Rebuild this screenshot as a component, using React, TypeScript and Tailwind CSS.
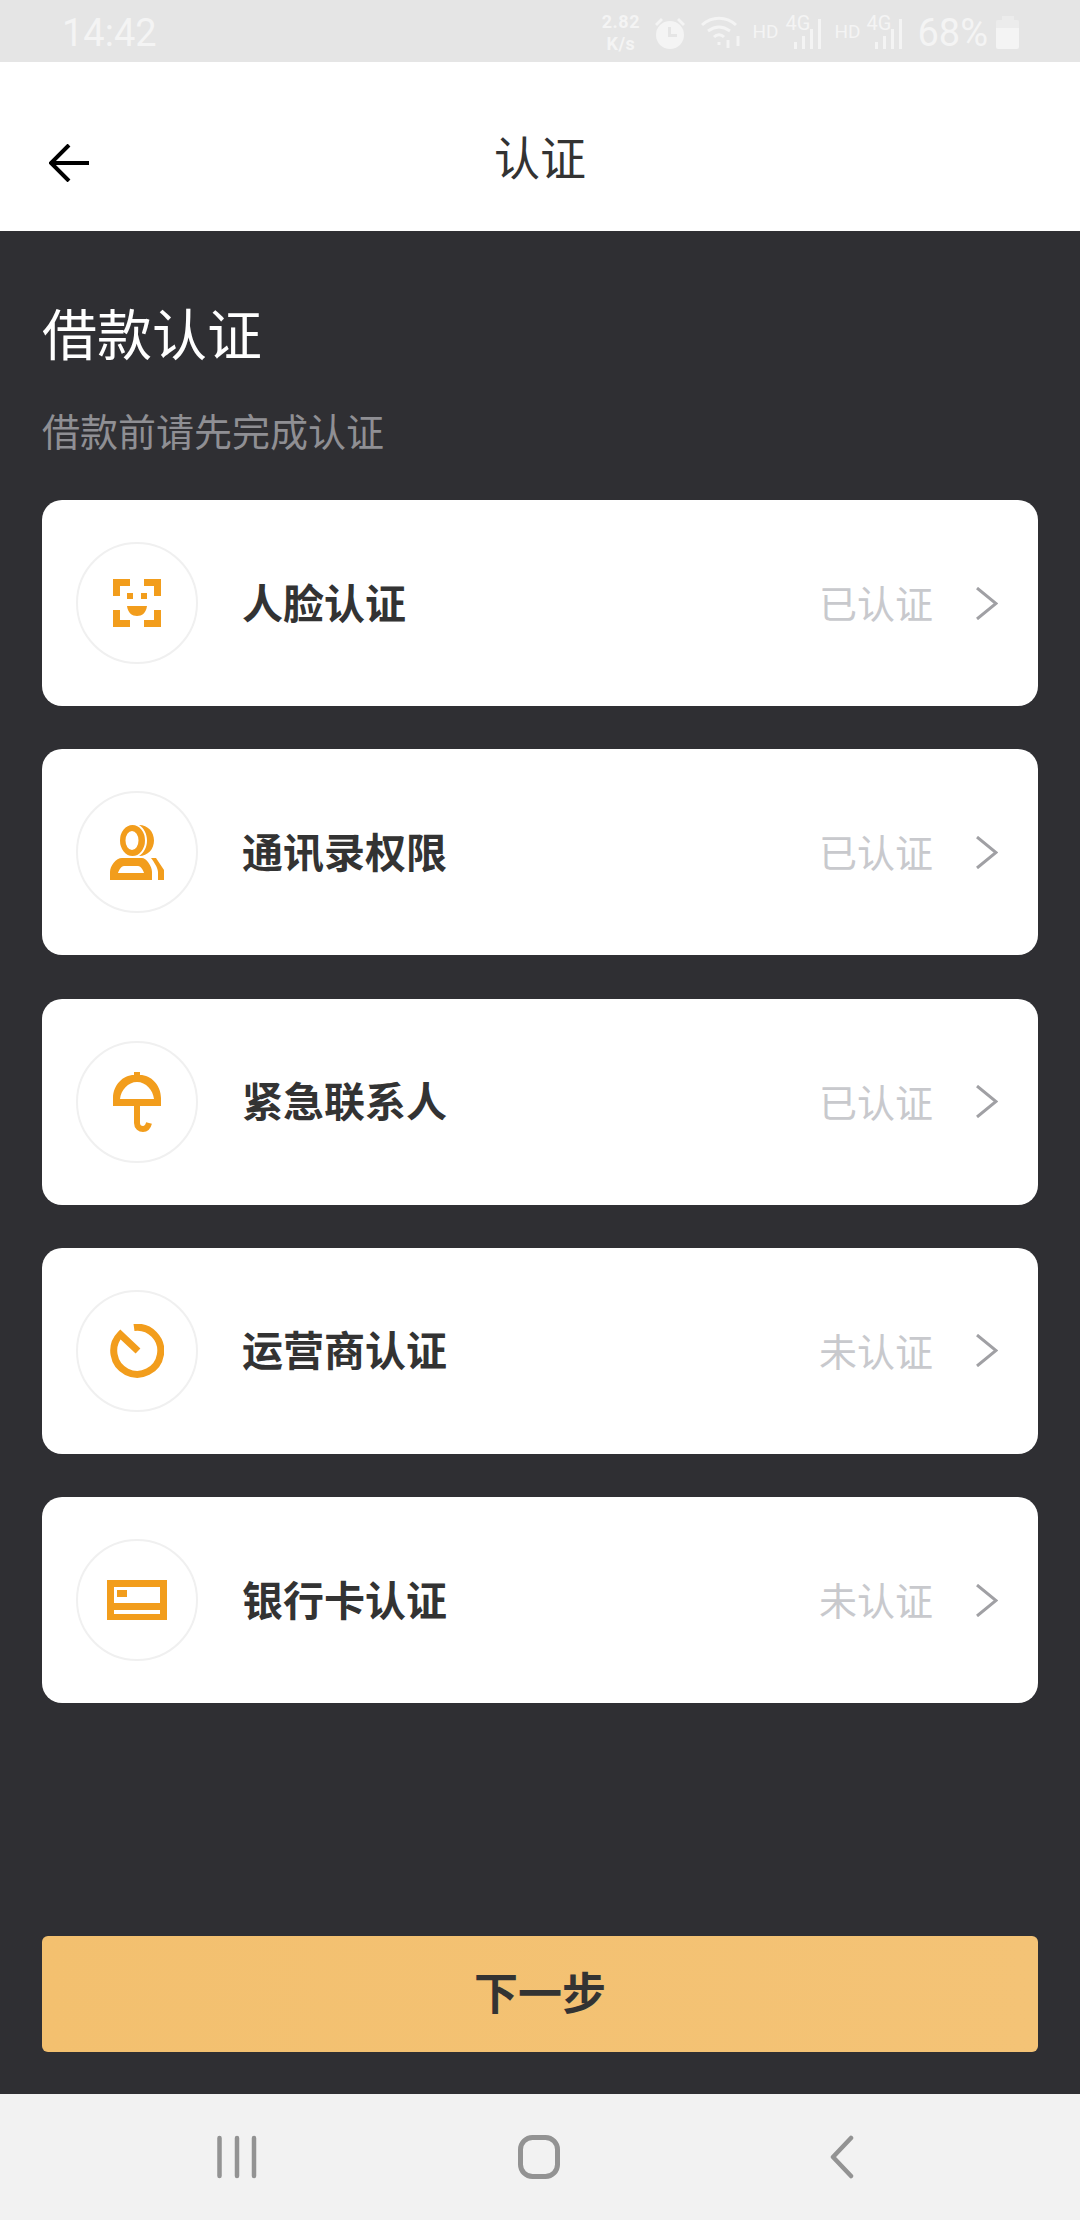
import type { ReactNode } from 'react';

const FONT = "font-['Roboto','Noto_Sans_CJK_SC',sans-serif]";

// ─── Icons ────────────────────────────────────────────────────────────────────

function FaceIcon() {
  return (
    <svg width="48" height="48" viewBox="0 0 48 48" fill="#f29d1c">
      <path d="M0 0h17v7H7v10H0zM31 0h17v17h-7V7H31zM0 31h7v10h10v7H0zM41 31h7v17H31v-7h10z" />
      <rect x="14" y="14" width="6" height="6" />
      <rect x="28" y="14" width="6" height="6" />
      <path d="M14 27h20c-1 7-5 10-10 10s-9-3-10-10z" />
    </svg>
  );
}

function ContactsIcon() {
  return (
    <svg width="54" height="55" viewBox="0 0 54 55" fill="#f29d1c">
      <path
        fillRule="evenodd"
        d="M22.5 0a12.5 15.5 0 1 0 0 31a12.5 15.5 0 1 0 0-31zM22 6a6.5 9.5 0 1 0 0 19a6.5 9.5 0 1 0 0-19z"
      />
      <path d="M29 0c9 0 15 7 15 15.5S38 31 29 31c5-3 8-9 8-15.5S34 3 29 0z" />
      <path fillRule="evenodd" d="M0 55v-8c0-6 6-14 12-14h20c4 0 10 8 10 14v8zM8 48h26c-1-3-3-7-6-7H14c-3 0-5 4-6 7z" />
      <path d="M41 33h5l8 12v10h-6v-8c0-4-4-10-7-14z" />
    </svg>
  );
}

function UmbrellaIcon() {
  return (
    <svg width="48" height="60" viewBox="0 0 48 60" fill="none">
      <path
        fill="#f29d1c"
        fillRule="evenodd"
        d="M0 34v-8C0 13 10 3 21 3V0h6v3c11 0 21 10 21 23v8zM7 27h34c-1-9-8-17-17-17S8 18 7 27z"
      />
      <path d="M24 34v17c0 4 3 6 6 6s5-2 6-6" stroke="#f29d1c" strokeWidth="6" />
    </svg>
  );
}

function OperatorIcon() {
  return (
    <svg width="54" height="54" viewBox="0 0 54 54" fill="none" stroke="#f29d1c" strokeWidth="7">
      <path d="M24 3.5A23.5 23.5 0 1 1 10.4 10.4L28 27" />
    </svg>
  );
}

function CardIcon() {
  return (
    <svg width="60" height="40" viewBox="0 0 60 40" fill="#f29d1c">
      <path fillRule="evenodd" d="M0 0h60v40H0zM7 7v16h46V7zM7 30v4h46v-4z" />
      <rect x="10" y="10" width="10" height="7" />
    </svg>
  );
}

function Signal() {
  return (
    <div className="relative h-[32px] w-[36px]">
      <span className="absolute left-0 top-[-3px] text-[20px] leading-[18px]">4G</span>
      <div className="absolute bottom-0 right-0 flex items-end gap-[5px]">
        <div className="h-[7px] w-[3px] bg-[#f4f4f4]" />
        <div className="h-[13px] w-[3px] bg-[#f4f4f4]" />
        <div className="h-[20px] w-[3px] bg-[#f4f4f4]" />
        <div className="h-[30px] w-[3px] bg-[#f4f4f4]" />
      </div>
    </div>
  );
}

function StatusBar() {
  return (
    <div className="flex h-[62px] shrink-0 items-center bg-[#e5e5e5] pl-[62px] pr-[61px] pt-[3px] text-[#f4f4f4]">
      <span className="text-[38px] leading-none">14:42</span>
      <div className="ml-auto flex items-center">
        <div className="mr-[12px] flex w-[41px] flex-col items-center text-[18px] font-bold leading-[21.5px] tracking-[0.5px]">
          <span>2.82</span>
          <span>K/s</span>
        </div>
        <svg width="34" height="34" viewBox="0 0 34 34" fill="#f4f4f4" className="mr-[14px]">
          <path fillRule="evenodd" d="M17 5a14 14 0 1 1 0 28 14 14 0 0 1 0-28zM15 11v10h9v-3h-6v-7z" />
          <path d="M2 8l6-6 2 2-6 6zM32 8l-6-6-2 2 6 6z" />
        </svg>
        <svg width="42" height="34" viewBox="0 0 42 34" fill="none" stroke="#f4f4f4" strokeWidth="3" className="mr-[9px]">
          <path d="M1 9c10-9 24-9 34 0M7 15c7-5 15-5 22 0M13 21c3-3 7-3 10 0" />
          <path d="M18 26v3M27 24v8M37 20v10" />
        </svg>
        <span className="mr-[7px] text-[19px]">HD</span>
        <Signal />
        <span className="ml-[13px] mr-[6px] text-[19px]">HD</span>
        <Signal />
        <span className="ml-[15px] text-[38px] leading-none">68%</span>
        <div className="ml-[8px] flex h-[33px] w-[23px] flex-col items-center">
          <div className="h-[4px] w-[12px] bg-[#ececec]" />
          <div className="h-[8px] w-full rounded-t-[2px] bg-[#ececec]" />
          <div className="w-full flex-1 rounded-b-[2px] bg-[#f4f4f4]" />
        </div>
      </div>
    </div>
  );
}

// ─── Row ──────────────────────────────────────────────────────────────────────

function AuthRow({ icon, title, status }: { icon: ReactNode; title: string; status: string }) {
  return (
    <div className="flex h-[206px] items-center rounded-[20px] bg-white pl-[34px] pr-[40px]">
      <div className="flex h-[122px] w-[122px] shrink-0 items-center justify-center rounded-full border-2 border-[#f0f0f0]">
        {icon}
      </div>
      <span className="ml-[44px] pt-[4px] text-[41px] font-bold leading-none text-[#333333]">{title}</span>
      <span className="ml-auto pt-[4px] text-[38px] leading-none text-[#c8c9cd]">{status}</span>
      <svg width="22" height="33" viewBox="0 0 22 33" fill="none" stroke="#a0a0a4" strokeWidth="3" className="ml-[43px]">
        <path d="M1 1l19 15.5L1 32" />
      </svg>
    </div>
  );
}

const ROWS = [
  { icon: <FaceIcon />, title: '人脸认证', status: '已认证' },
  { icon: <ContactsIcon />, title: '通讯录权限', status: '已认证' },
  { icon: <UmbrellaIcon />, title: '紧急联系人', status: '已认证' },
  { icon: <OperatorIcon />, title: '运营商认证', status: '未认证' },
  { icon: <CardIcon />, title: '银行卡认证', status: '未认证' },
];

export default function App() {
  return (
    <div className={`flex h-[2220px] w-[1080px] flex-col overflow-hidden bg-[#2f2f33] ${FONT}`}>
      <StatusBar />

      {/* Header */}
      <div className="relative flex h-[169px] shrink-0 items-center justify-center bg-white pt-[25px]">
        <svg width="40" height="38" viewBox="0 0 40 38" fill="none" stroke="#000" strokeWidth="4" className="absolute left-[49px] top-[82px]">
          <path d="M40 19H3M20 1L2 19l18 18" />
        </svg>
        <span className="text-[46px] leading-none text-[#333333]">认证</span>
      </div>

      {/* Content */}
      <div className="flex flex-1 flex-col px-[42px]">
        <h1 className="mt-[78px] text-[55px] font-normal leading-none text-white">借款认证</h1>
        <p className="mt-[50px] text-[38px] leading-none text-[#8f8f94]">借款前请先完成认证</p>
        <div className="mt-[48px] flex flex-col gap-[43.25px]">
          {ROWS.map((row) => (
            <AuthRow key={row.title} {...row} />
          ))}
        </div>
        <button className="mb-[42px] mt-auto flex h-[116px] items-center justify-center rounded-[6px] bg-gradient-to-r from-[#f3c06f] to-[#f4c376] pt-[2px] text-[44px] font-bold text-[#333333]">
          下一步
        </button>
      </div>

      {/* Nav bar */}
      <div className="flex h-[126px] shrink-0 items-center bg-[#f2f2f2] pl-[217px]">
        <svg width="40" height="44" viewBox="0 0 40 44" fill="none" stroke="#939393" strokeWidth="4.5" strokeLinecap="round">
          <path d="M2.5 3v38M20 3v38M37 3v38" />
        </svg>
        <svg width="42" height="44" viewBox="0 0 42 44" fill="none" stroke="#939393" strokeWidth="5" className="ml-[261px]">
          <rect x="2.5" y="2.5" width="37" height="39" rx="12" />
        </svg>
        <svg width="24" height="44" viewBox="0 0 24 44" fill="none" stroke="#939393" strokeWidth="4.5" strokeLinecap="round" strokeLinejoin="round" className="ml-[270px]">
          <path d="M21 3L3 22l18 19" />
        </svg>
      </div>
    </div>
  );
}
